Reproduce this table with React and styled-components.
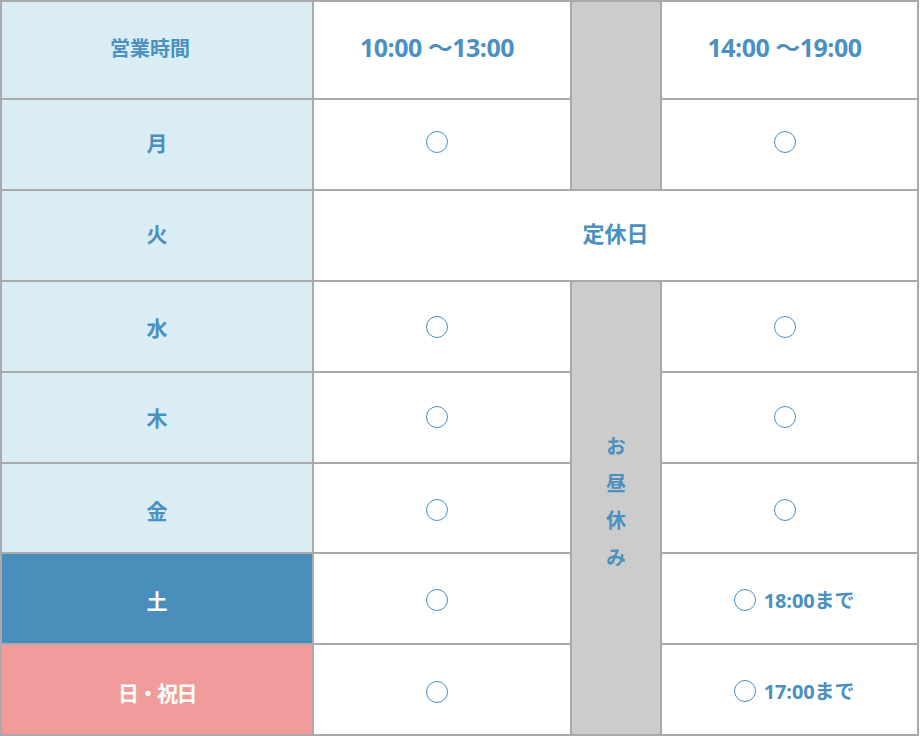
import React from "react";
import styled, { createGlobalStyle } from "styled-components";

const Global = createGlobalStyle`
  html, body { margin: 0; padding: 0; background: #ffffff; }
  body { font-family: "Open Sans", "Noto Sans CJK JP", sans-serif; }
`;

const BLUE = "#4a90c0";

const Table = styled.div`
  display: grid;
  width: 919px;
  box-sizing: border-box;
  grid-template-columns: 310px 256px 88px 255px;
  grid-template-rows: 96px 89px 89px 89px 89px 88px 89px 89px;
  gap: 2px;
  padding: 2px;
  background: #aaaaaa;
`;

const tones = {
  light: { bg: "#daedf4", fg: BLUE },
  sat: { bg: "#4a8fbc", fg: "#ffffff" },
  sun: { bg: "#f09c9a", fg: "#ffffff" },
};

const lift = (p) => {
  const v = p.$lift || 0;
  return v >= 0 ? `padding-bottom: ${v * 2}px;` : `padding-top: ${-v * 2}px;`;
};

const DayCell = styled.div`
  display: flex;
  align-items: center;
  justify-content: center;
  box-sizing: border-box;
  ${lift}
  padding-right: ${(p) => (p.$small ? "14px" : "0")};
  background: ${(p) => tones[p.$tone || "light"].bg};
  color: ${(p) => tones[p.$tone || "light"].fg};
  font-family: "Noto Sans CJK JP", sans-serif;
  font-weight: 700;
  font-size: ${(p) => (p.$small ? "20px" : "21px")};
  letter-spacing: ${(p) => (p.$tight ? "-1.5px" : "0")};
`;

const Cell = styled.div`
  display: flex;
  align-items: center;
  justify-content: center;
  box-sizing: border-box;
  gap: 8px;
  ${lift}
  padding-right: ${(p) => (p.$nudge === "left" ? "10px" : "0")};
  padding-left: ${(p) => (p.$nudge === "right" ? "9px" : "0")};
  background: #ffffff;
  color: ${BLUE};
  grid-column: ${(p) => p.$span || "auto"};
`;

const TimeText = styled.span`
  font-family: "Open Sans", "Noto Sans CJK JP", sans-serif;
  font-weight: 700;
  font-size: 25px;
  letter-spacing: -0.5px;
  color: ${BLUE};
`;

const Note = styled.span`
  font-family: "Open Sans", "Noto Sans CJK JP", sans-serif;
  font-weight: 700;
  font-size: 20px;
  letter-spacing: -0.1px;
  color: ${BLUE};
`;

const Closed = styled.span`
  font-family: "Noto Sans CJK JP", sans-serif;
  font-weight: 700;
  font-size: 22px;
  color: ${BLUE};
`;

const Mark = styled.span`
  display: inline-block;
  flex: none;
  width: 20px;
  height: 20px;
  border: 1.3px solid ${BLUE};
  border-radius: 50%;
  font-size: 0;
  color: transparent;
  overflow: hidden;
`;

const BreakCell = styled.div`
  display: flex;
  align-items: center;
  justify-content: center;
  background: #cccccc;
  grid-column: 3;
  grid-row: ${(p) => p.$rows};
`;

const VerticalText = styled.span`
  writing-mode: vertical-rl;
  font-family: "Noto Sans CJK JP", sans-serif;
  font-weight: 700;
  font-size: 20px;
  letter-spacing: 17px;
  color: ${BLUE};
  margin-bottom: -4px;
`;

const Circle = () => <Mark aria-label="○">○</Mark>;

const openDays = [
  { label: "水", lift: 0 },
  { label: "木", lift: 1 },
  { label: "金", lift: -2 },
  { label: "土", tone: "sat", lift: -1, note: "18:00まで" },
  { label: "日・祝日", tone: "sun", lift: -2, note: "17:00まで", tight: true },
];

export default function App() {
  return (
    <>
      <Global />
      <Table>
        <DayCell $small $lift={2.5}>営業時間</DayCell>
        <Cell $lift={4.5} $nudge="left">
          <TimeText>10:00 〜13:00</TimeText>
        </Cell>
        <BreakCell $rows="1 / 3" />
        <Cell $lift={4.5} $nudge="left">
          <TimeText>14:00 〜19:00</TimeText>
        </Cell>

        <DayCell $lift={2.5}>月</DayCell>
        <Cell $lift={2.5} $nudge="left">
          <Circle />
        </Cell>
        <Cell $lift={2.5} $nudge="left">
          <Circle />
        </Cell>

        <DayCell $lift={3}>火</DayCell>
        <Cell $span="2 / 5" $lift={3.5}>
          <Closed>定休日</Closed>
        </Cell>

        {openDays.map((d, i) => (
          <React.Fragment key={d.label}>
            <DayCell $tone={d.tone} $lift={d.lift} $tight={d.tight}>
              {d.label}
            </DayCell>
            <Cell $lift={d.lift} $nudge="left">
              <Circle />
            </Cell>
            {i === 0 && (
              <BreakCell $rows="4 / 9">
                <VerticalText>お昼休み</VerticalText>
              </BreakCell>
            )}
            <Cell $lift={d.note ? -1 : d.lift} $nudge={d.note ? "right" : "left"}>
              <Circle />
              {d.note && <Note>{d.note}</Note>}
            </Cell>
          </React.Fragment>
        ))}
      </Table>
    </>
  );
}
